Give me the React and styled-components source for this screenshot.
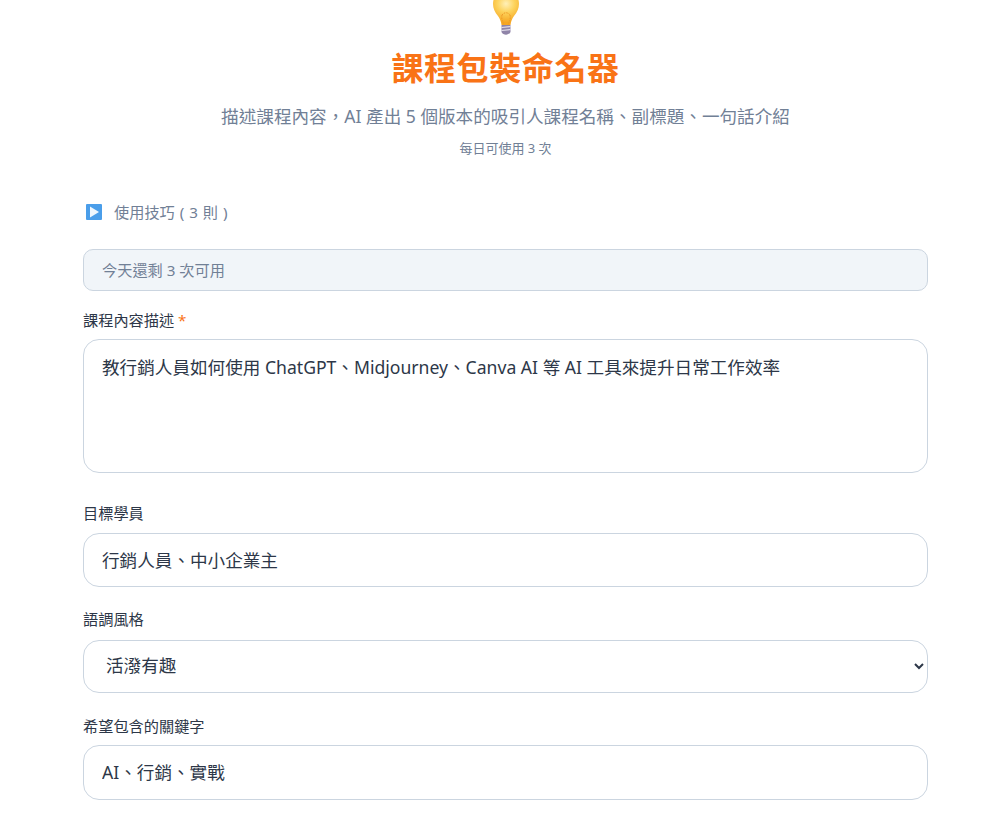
import styled, { createGlobalStyle } from "styled-components"

const GlobalStyle = createGlobalStyle`
html, body {
  margin: 0;
  height: 813px;
  overflow: hidden;
  background: #fff;
  font-family: "Noto Sans", "Noto Sans CJK TC", sans-serif;
}
* { box-sizing: border-box; }
`

const Page = styled.div`
width: 845px;
margin-left: 83px;
`

const Header = styled.header`
display: flex;
flex-direction: column;
align-items: center;
`

const Bulb = styled.svg`
display: block;
width: 28px;
height: 36px;
`

const Title = styled.h1`
margin: 10px 0 0;
font-size: 32px;
line-height: 44px;
font-weight: 700;
letter-spacing: 0.6px;
color: #f97316;
`

const Subtitle = styled.p`
margin: 13px 0 0;
font-size: 17.6px;
line-height: 26px;
color: #718096;
`

const Quota = styled.p`
margin: 10px 0 0;
font-size: 13px;
line-height: 18px;
color: #718096;
`

const Tips = styled.div`
display: flex;
align-items: center;
gap: 12px;
margin-top: 45px;
padding-left: 3px;
font-size: 15.2px;
line-height: 20px;
word-spacing: 1px;
color: #718096;
`

const Notice = styled.div`
margin-top: 27px;
height: 42px;
padding: 0 18px 2px;
display: flex;
align-items: center;
background: #f1f5f9;
border: 1px solid #cbd5e0;
border-radius: 10px;
font-size: 15.2px;
color: #718096;
`

const Field = styled.div`
margin-top: ${(p) => p.$gap}px;
`

const Label = styled.label`
display: block;
margin-bottom: ${(p) => p.$below || 9}px;
font-size: 15.2px;
line-height: 20px;
font-weight: 400;
color: #2d3748;
`

const Required = styled.span`
color: #f97316;
`

const controlStyle = `
display: block;
width: 100%;
background: #fff;
border: 1px solid #cbd5e0;
border-radius: 16px;
font-family: inherit;
font-size: 17.6px;
color: #2d3748;
outline: none;
`

const TextArea = styled.textarea`
${controlStyle}
height: 134px;
padding: 13px 18px;
line-height: 28px;
resize: none;
`

const TextInput = styled.input`
${controlStyle}
height: ${(p) => p.$height}px;
padding: 0 18px 2px;
`

const Select = styled.select`
${controlStyle}
height: 53px;
padding: 0 18px 3px;
`

function BulbIcon() {
  return (
    <Bulb viewBox="0 0 28 36" aria-hidden="true">
      <defs>
        <radialGradient id="glass" cx="50%" cy="15%" r="75%">
          <stop offset="0%" stopColor="#fff0b8" />
          <stop offset="45%" stopColor="#fdd35c" />
          <stop offset="100%" stopColor="#f5a623" />
        </radialGradient>
      </defs>
      <path d="M1.5 0 C0 6 2 11 6 16 C8 19 9 21 9.5 25 L18.5 25 C19 21 20 19 22 16 C26 11 28 6 26.5 0 Z" fill="url(#glass)" />
      <path d="M10 15 C9 19 11 22 12 25 M18 15 C19 19 17 22 16 25 M10 15 C12 12 16 12 18 15" fill="none" stroke="#ee9a28" strokeWidth="1" strokeDasharray="1.5 1" />
      <path d="M9.5 25 H18.5 V32 C17 35.5 11 35.5 9.5 32 Z" fill="#8f84a8" />
      <path d="M9.5 27.5 L18.5 26.5 M9.5 30.5 L18.5 29.5" stroke="#e4e0ec" strokeWidth="1.2" />
    </Bulb>
  )
}

function PlayIcon() {
  return (
    <svg width="16" height="16" viewBox="0 0 16 16" aria-hidden="true">
      <rect width="16" height="16" rx="1" fill="#4a9eea" />
      <path d="M4 2.5 L13 8 L4 13.5 Z" fill="#eef6fd" />
    </svg>
  )
}

function App() {
  return (
    <Page>
      <GlobalStyle />
      <Header>
        <BulbIcon />
        <Title>課程包裝命名器</Title>
        <Subtitle>描述課程內容，AI 產出 5 個版本的吸引人課程名稱、副標題、一句話介紹</Subtitle>
        <Quota>每日可使用 3 次</Quota>
      </Header>
      <Tips>
        <PlayIcon />
        <span>使用技巧 ( 3 則 )</span>
      </Tips>
      <Notice>今天還剩 3 次可用</Notice>
      <Field $gap={19}>
        <Label>課程內容描述 <Required>*</Required></Label>
        <TextArea defaultValue="教行銷人員如何使用 ChatGPT、Midjourney、Canva AI 等 AI 工具來提升日常工作效率" />
      </Field>
      <Field $gap={30}>
        <Label $below={10}>目標學員</Label>
        <TextInput $height={54} defaultValue="行銷人員、中小企業主" />
      </Field>
      <Field $gap={22}>
        <Label $below={11}>語調風格</Label>
        <Select defaultValue="活潑有趣">
          <option>活潑有趣</option>
          <option>專業正式</option>
        </Select>
      </Field>
      <Field $gap={23}>
        <Label>希望包含的關鍵字</Label>
        <TextInput $height={55} defaultValue="AI、行銷、實戰" />
      </Field>
    </Page>
  )
}

export default App
